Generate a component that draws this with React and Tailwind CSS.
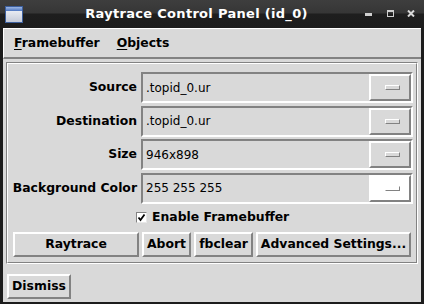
import React from "react";

const raised = "border-2 border-t-white border-l-white border-b-[#828282] border-r-[#828282]";
const sunken = "border-2 border-t-[#828282] border-l-[#828282] border-b-white border-r-white";

function Field({ label, value, swatch }) {
  return (
    <div className="flex items-center h-[31px]">
      <div className="w-[130px] pr-[1px] text-right font-bold text-[12.4px]">{label}</div>
      <div className={`ml-[3px] flex-1 h-full flex ${sunken}`}>
        <div className="flex-1 flex items-center pl-[3px] text-[12px]">{value}</div>
        <div
          className={`w-[42px] flex items-center justify-center ${raised} ${
            swatch ? "bg-white" : "bg-[#d9d9d9]"
          }`}
        >
          <div className="ml-[4px] w-[15px] h-[5px] border border-t-white border-l-white border-b-[#828282] border-r-[#828282]" />
        </div>
      </div>
    </div>
  );
}

function Btn({ children, w }) {
  return (
    <button
      className={`${w} h-[25px] ${raised} bg-[#d9d9d9] font-bold text-[12.4px] flex items-center justify-center`}
    >
      {children}
    </button>
  );
}

export default function App() {
  return (
    <div
      className="w-[424px] h-[304px] bg-[#1c1c1c] flex flex-col text-black"
      style={{ fontFamily: '"DejaVu Sans", sans-serif' }}
    >
      {/* title bar */}
      <div className="h-[28px] shrink-0 flex items-center bg-[linear-gradient(#3e3e3e_0px,#363636_13px,#1e1e1e_14px,#1c1c1c_28px)] relative">
        <div className="ml-[5px] w-[18px] h-[17px] border border-[#3d5f9c] flex flex-col">
          <div className="h-[4px] bg-[linear-gradient(#9cb6e4,#4e76c0)]" />
          <div className="flex-1 bg-[linear-gradient(#e8ebf2,#c4cad8)]" />
        </div>
        <div className="flex-1 text-center text-white font-bold text-[13px] tracking-[0.3px] pl-[6px] pr-[60px]">
          Raytrace Control Panel (id_0)
        </div>
        <div className="absolute left-[365px] top-[13px] w-[7px] h-[3px] bg-[#d0d0d0]" />
        <div className="absolute left-[387px] top-[10px] w-[7px] h-[7px] border border-[#d0d0d0] border-t-2" />
        <svg className="absolute left-[407px] top-[10px]" width="8" height="7" viewBox="0 0 8 7">
          <path d="M1 0.5 L7 6.5 M7 0.5 L1 6.5" stroke="#d8d8d8" strokeWidth="2" />
        </svg>
      </div>

      {/* window body */}
      <div className="mx-[3px] mb-[2px] flex-1 bg-[#d9d9d9] flex flex-col">
        {/* menu bar */}
        <div className="h-[31px] shrink-0 flex items-center gap-[17px] pl-[10px] text-[12.4px] font-bold border-t border-l border-t-white border-l-white border-b-2 border-b-[#828282]">
          <span>
            <span className="underline underline-offset-[2px]">F</span>ramebuffer
          </span>
          <span>
            <span className="underline underline-offset-[2px]">O</span>bjects
          </span>
        </div>

        {/* frame */}
        <div className="mt-[3px] ml-[3px] mr-[3px] border border-t-[#828282] border-l-[#828282] border-b-white border-r-white">
          <div className="border border-t-white border-l-white border-b-[#828282] border-r-[#828282] pt-[8px] pr-[3px] pb-[5px] flex flex-col">
            <div className="flex flex-col gap-[2.5px]">
              <Field label="Source" value=".topid_0.ur" />
              <Field label="Destination" value=".topid_0.ur" />
              <Field label="Size" value="946x898" />
              <Field label="Background Color" value="255 255 255" swatch />
            </div>
            <div className="h-[28px] flex items-center pl-[128px]">
              <div className="w-[11px] h-[11px] bg-white border border-t-[#828282] border-l-[#828282] border-b-[#e8e8e8] border-r-[#e8e8e8] flex items-center justify-center">
                <svg width="9" height="9" viewBox="0 0 9 9">
                  <path d="M1.5 4.5 L3.5 7 L7.5 1.5" stroke="#000" strokeWidth="1.8" fill="none" />
                </svg>
              </div>
              <span className="ml-[5px] font-bold text-[12.4px]">Enable Framebuffer</span>
            </div>
            <div className="flex gap-[3px] pl-[5px]">
              <Btn w="w-[126px]">Raytrace</Btn>
              <Btn w="w-[49px]">Abort</Btn>
              <Btn w="w-[59px]">fbclear</Btn>
              <Btn w="w-[155px]">Advanced Settings...</Btn>
            </div>
          </div>
        </div>

        <div className="mt-[10px] ml-[4px]">
          <Btn w="w-[64px]">Dismiss</Btn>
        </div>
      </div>
    </div>
  );
}
